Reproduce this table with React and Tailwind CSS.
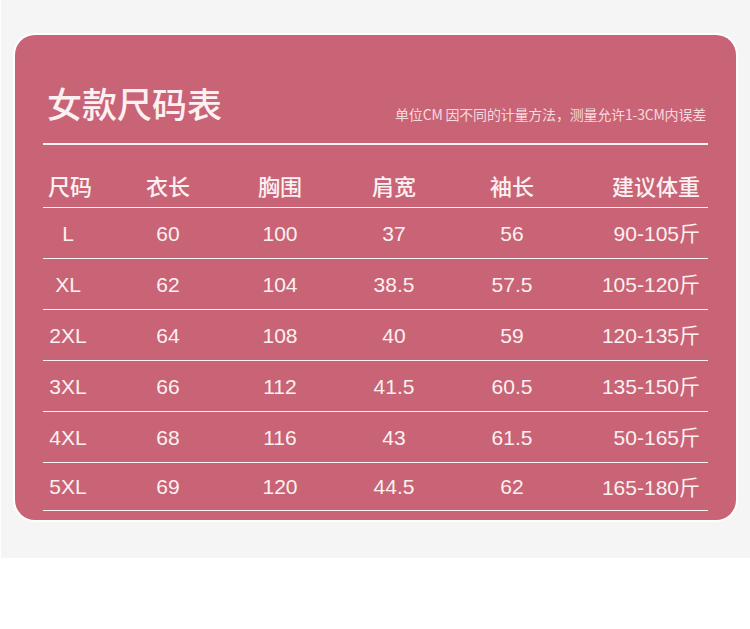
import React from 'react';

const font = { fontFamily: '"Liberation Sans", Arial, "Noto Sans CJK SC", sans-serif' };
const cjk = { fontFamily: '"Noto Sans CJK SC", sans-serif' };

const headers = ['尺码', '衣长', '胸围', '肩宽', '袖长', '建议体重'];

const rows = [
  ['L', '60', '100', '37', '56', '90-105斤'],
  ['XL', '62', '104', '38.5', '57.5', '105-120斤'],
  ['2XL', '64', '108', '40', '59', '120-135斤'],
  ['3XL', '66', '112', '41.5', '60.5', '135-150斤'],
  ['4XL', '68', '116', '43', '61.5', '50-165斤'],
  ['5XL', '69', '120', '44.5', '62', '165-180斤'],
];

const cols = 'grid grid-cols-[50px_150px_74px_154px_82px_1fr]';

const App = () => {
  return (
    <div className="w-[750px] h-[629px] bg-white" style={font}>
      <div className="h-[558px] ml-px bg-[#f5f5f5] pt-[35px] pl-[14px] pr-[14px]">
        <div className="rounded-[20px] bg-[#c86475] ring-2 ring-white px-[28px] pt-[50px] pb-[9px] text-[#fcf0f2]">
          <div className="flex items-start justify-between h-[35px]">
            <h1 className="ml-[4px] text-[35px] font-medium leading-none" style={cjk}>
              女款尺码表
            </h1>
            <p className="mt-[22px] mr-[2px] text-[14px] leading-none tracking-[-0.2px] text-[#f6d9df]" style={cjk}>
              单位CM 因不同的计量方法，测量允许1-3CM内误差
            </p>
          </div>
          <div className="mt-[23px] h-[2px] bg-[#fdf4f5]" />

          <div
            className={`${cols} items-end h-[63px] pb-[11px] border-b border-[#fdf4f5] text-[22px] font-medium leading-none`}
            style={cjk}
          >
            {headers.map((h, i) => (
              <div
                key={h}
                className={i === 0 ? 'pl-[5px] whitespace-nowrap' : i === 5 ? 'text-right pr-[8px]' : 'text-center whitespace-nowrap'}
              >
                {h}
              </div>
            ))}
          </div>

          {rows.map((r, ri) => (
            <div
              key={r[0]}
              className={`${cols} items-center border-b border-[#fdf4f5] text-[21px] leading-none ${ri === rows.length - 1 ? 'h-[48px]' : 'h-[51px]'}`}
            >
              {r.map((c, i) => (
                <div
                  key={i}
                  className={i === 5 ? 'text-right pr-[8px] whitespace-nowrap' : 'text-center whitespace-nowrap'}
                >
                  {c.endsWith('斤') ? (
                    <>
                      {c.slice(0, -1)}
                      <span style={cjk}>斤</span>
                    </>
                  ) : (
                    c
                  )}
                </div>
              ))}
            </div>
          ))}
        </div>
      </div>
    </div>
  );
};

export default App;
